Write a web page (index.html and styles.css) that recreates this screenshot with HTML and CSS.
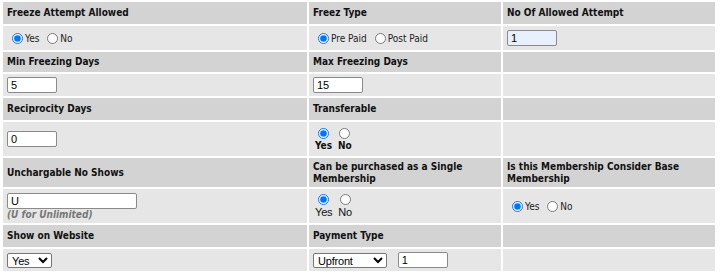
FILE: index.html
```html
<!DOCTYPE html>
<html lang="en">
  <head>
    <meta charset="UTF-8" />
    <title>Membership Settings</title>
    <link rel="stylesheet" href="styles.css">
  </head>
  <body>
    <table class="settings">
      <colgroup>
        <col class="col-a" />
        <col class="col-b" />
        <col class="col-c" />
      </colgroup>
      <tr class="head">
        <td>Freeze Attempt Allowed</td>
        <td>Freez Type</td>
        <td>No Of Allowed Attempt</td>
      </tr>
      <tr class="value r2">
        <td>
          <input type="radio" name="freeze" id="fzYes" checked /><label for="fzYes">Yes</label>
          <input type="radio" name="freeze" id="fzNo" /><label for="fzNo">No</label>
        </td>
        <td>
          <input type="radio" name="ftype" id="ftPre" checked /><label for="ftPre">Pre Paid</label>
          <input type="radio" name="ftype" id="ftPost" /><label for="ftPost">Post Paid</label>
        </td>
        <td><input type="text" class="short filled" value="1" /></td>
      </tr>
      <tr class="head r3">
        <td>Min Freezing Days</td>
        <td>Max Freezing Days</td>
        <td></td>
      </tr>
      <tr class="value">
        <td><input type="text" class="short" value="5" /></td>
        <td><input type="text" class="short" value="15" /></td>
        <td></td>
      </tr>
      <tr class="head">
        <td>Reciprocity Days</td>
        <td>Transferable</td>
        <td></td>
      </tr>
      <tr class="value tall">
        <td><input type="text" class="short" value="0" /></td>
        <td>
          <table class="stack bold">
            <tr class="dots"><td><input type="radio" name="trans" checked /></td><td><input type="radio" name="trans" /></td></tr>
            <tr><td>Yes</td><td>No</td></tr>
          </table>
        </td>
        <td></td>
      </tr>
      <tr class="head two">
        <td>Unchargable No Shows</td>
        <td>Can be purchased as a Single Membership</td>
        <td>Is this Membership Consider Base Membership</td>
      </tr>
      <tr class="value tall">
        <td>
          <input type="text" class="long" value="U" />
          <div class="hint">(U for Unlimited)</div>
        </td>
        <td>
          <table class="stack plain">
            <tr class="dots"><td><input type="radio" name="single" checked /></td><td><input type="radio" name="single" /></td></tr>
            <tr><td>Yes</td><td>No</td></tr>
          </table>
        </td>
        <td>
          <input type="radio" name="base" id="bsYes" checked /><label for="bsYes">Yes</label>
          <input type="radio" name="base" id="bsNo" /><label for="bsNo">No</label>
        </td>
      </tr>
      <tr class="head">
        <td>Show on Website</td>
        <td>Payment Type</td>
        <td></td>
      </tr>
      <tr class="value">
        <td>
          <select class="sel-yes">
            <option>Yes</option>
            <option>No</option>
          </select>
        </td>
        <td>
          <select class="sel-pay">
            <option>Upfront</option>
            <option>Installment</option>
          </select>
          <input type="text" class="short gap" value="1" />
        </td>
        <td></td>
      </tr>
    </table>
  </body>
</html>
```

FILE: styles.css
```css
body {
  margin: 0;
  padding: 0 0 0 1px;
  background: #fff;
  font-family: "DejaVu Sans Condensed", "DejaVu Sans", Verdana, sans-serif;
  font-stretch: condensed;
  font-size: 10px;
  color: #111;
}

.settings {
  width: 716px;
  border-spacing: 2px;
  table-layout: fixed;
}
.col-a {
  width: 304px;
}
.col-b {
  width: 192px;
}

.settings > tbody > tr > td {
  padding: 0 4px;
  vertical-align: middle;
}

.head td {
  background: #d3d3d3;
  font-weight: bold;
  height: 22px;
  line-height: 12px;
}
.head.r3 td {
  height: 20px;
}
.head.two td {
  height: 29px;
}

.value td {
  background: #e6e6e6;
  height: 22px;
}
.value.r2 td {
  height: 24px;
}
.value.tall > td {
  height: 34px;
}

input[type="radio"] {
  width: 11px;
  height: 11px;
  margin: 0 2px 0 5px;
  vertical-align: -2px;
}
label {
  color: #222;
}

input[type="text"],
select {
  box-sizing: border-box;
  border-radius: 2px;
  font-family: "Liberation Sans", Arial, sans-serif;
  font-size: 11px;
  letter-spacing: -0.2px;
  color: #000;
  background: #fff;
  vertical-align: middle;
}

input[type="text"] {
  height: 16px;
  padding: 0 3px;
  border: 1px solid #8a8a8a;
}
.short {
  width: 50px;
}
.long {
  width: 130px;
}
.filled {
  background: #e8f0fe !important;
}
.gap {
  margin-left: 8px;
}

.hint {
  color: #777;
  font-weight: bold;
  font-style: italic;
  line-height: 11px;
}

select {
  height: 15px;
  padding: 0;
  border: 1px solid #767676;
}
.sel-yes {
  width: 45px;
}
.sel-pay {
  width: 74px;
}

.stack {
  border-spacing: 0;
  margin-left: 2px;
}
.stack td {
  padding: 0 6px 0 0;
  height: 11px;
  text-align: center;
  vertical-align: top;
  line-height: 11px;
}
.stack .dots td {
  height: 12px;
  line-height: 0;
}
.stack input[type="radio"] {
  margin: 0;
  vertical-align: top;
}
.stack.bold td {
  font-weight: bold;
}
.stack.plain td {
  font-family: "Liberation Sans", Arial, sans-serif;
  font-size: 11px;
  letter-spacing: -0.2px;
  line-height: 12px;
}
```
